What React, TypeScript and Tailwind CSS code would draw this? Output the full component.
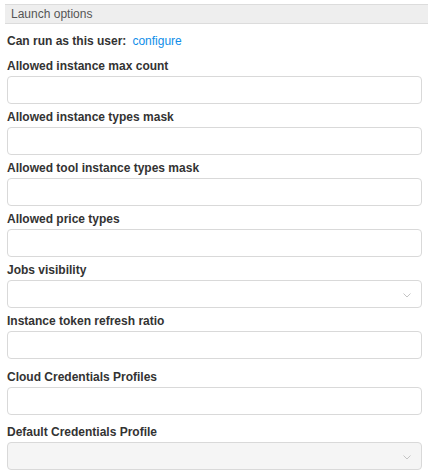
import React from "react";

const font = { fontFamily: '"Liberation Sans", Arial, sans-serif' };

function Chevron() {
  return (
    <svg width="8" height="5" viewBox="0 0 8 5" className="absolute right-[10px] top-[12px]" fill="none">
      <path d="M0.5 0.5 L4 4 L7.5 0.5" stroke="#c4c4c4" strokeWidth="1" />
    </svg>
  );
}

function Field({ label, select, disabled, mt = "mt-[5px]" }: { label: string; select?: boolean; disabled?: boolean; mt?: string }) {
  return (
    <div className={`flex flex-col ${mt}`}>
      <div className="h-4 leading-4 text-[12px] font-bold text-[#333] mb-[2px]">{label}</div>
      <div
        className={`relative h-[28px] w-[415px] rounded-[4px] border border-[#d9d9d9] ${disabled ? "bg-[#f5f5f5]" : "bg-white"}`}
      >
        {select && <Chevron />}
      </div>
    </div>
  );
}

export default function App() {
  return (
    <div className="w-[428px] h-[475px] bg-white overflow-hidden pt-[4px]" style={font}>
      {/* Заголовок секции */}
      <div className="ml-[5px] h-[20px] bg-[#eeeeee] border-y border-[#dcdcdc] flex items-center pl-[6px] text-[12px] text-[#555]">
        Launch options
      </div>

      <div className="pl-[7px] flex flex-col">
        <div className="mt-[9px] h-4 leading-4 text-[12px] flex">
          <span className="font-bold text-[#333]">Can run as this user:</span>
          <span className="ml-[6px] text-[#108ee9]">configure</span>
        </div>

        <Field label="Allowed instance max count" mt="mt-[9px]" />
        <Field label="Allowed instance types mask" />
        <Field label="Allowed tool instance types mask" />
        <Field label="Allowed price types" />
        <Field label="Jobs visibility" select />
        <Field label="Instance token refresh ratio" />
        <Field label="Cloud Credentials Profiles" mt="mt-[10px]" />
        <Field label="Default Credentials Profile" select disabled mt="mt-[9px]" />
      </div>
    </div>
  );
}
